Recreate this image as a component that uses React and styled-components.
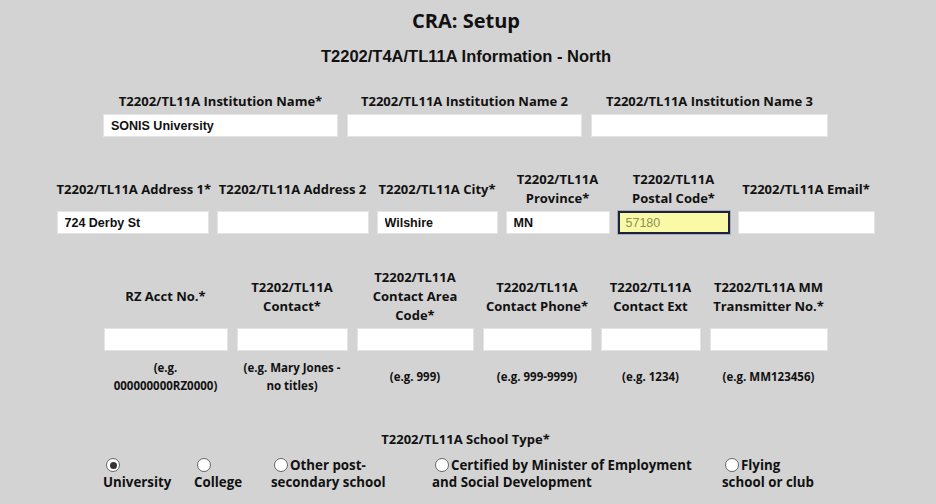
import React from "react";
import styled, { createGlobalStyle } from "styled-components";

const GlobalStyle = createGlobalStyle`
  body {
    margin: 0;
    background: #d3d3d3;
    font-family: "Open Sans", "Lato", sans-serif;
    color: #111;
  }
`;

const institution = [
  { label: "T2202/TL11A Institution Name*", value: "SONIS University" },
  { label: "T2202/TL11A Institution Name 2", value: "" },
  { label: "T2202/TL11A Institution Name 3", value: "" },
];

const address = [
  { label: "T2202/TL11A Address 1*", value: "724 Derby St" },
  { label: "T2202/TL11A Address 2", value: "" },
  { label: "T2202/TL11A City*", value: "Wilshire" },
  { label: ["T2202/TL11A", "Province*"], value: "MN" },
  { label: ["T2202/TL11A", "Postal Code*"], value: "57180", focus: true },
  { label: "T2202/TL11A Email*", value: "" },
];

const contact = [
  { label: ["RZ Acct No.*"], hint: ["(e.g.", "000000000RZ0000)"] },
  { label: ["T2202/TL11A", "Contact*"], hint: ["(e.g. Mary Jones -", "no titles)"] },
  { label: ["T2202/TL11A", "Contact Area", "Code*"], hint: ["(e.g. 999)"] },
  { label: ["T2202/TL11A", "Contact Phone*"], hint: ["(e.g. 999-9999)"] },
  { label: ["T2202/TL11A", "Contact Ext"], hint: ["(e.g. 1234)"] },
  { label: ["T2202/TL11A MM", "Transmitter No.*"], hint: ["(e.g. MM123456)"] },
];

const schoolTypes = [
  { first: "", rest: "University", checked: true },
  { first: "", rest: "College" },
  { first: "Other post-", rest: "secondary school" },
  { first: "Certified by Minister of Employment", rest: "and Social Development" },
  { first: "Flying", rest: "school or club" },
];

function Lines({ value }) {
  const list = Array.isArray(value) ? value : [value];
  return list.map((line, i) => (
    <React.Fragment key={i}>
      {i > 0 && <br />}
      {line}
    </React.Fragment>
  ));
}

export default function App() {
  return (
    <Page>
      <GlobalStyle />
      <Title>CRA: Setup</Title>
      <Subtitle>T2202/T4A/TL11A Information - North</Subtitle>

      <FieldGrid $cols="235px 235px 237px" $gap="9px" $top="26px">
        {institution.map((f) => (
          <Label key={f.label}>{f.label}</Label>
        ))}
        {institution.map((f) => (
          <TextBox key={f.label} defaultValue={f.value} />
        ))}
      </FieldGrid>

      <FieldGrid $cols="152px 152px 121px 104px 112px 137px" $gap="8px" $top="33px">
        {address.map((f, i) => (
          <Label key={i}>
            <Lines value={f.label} />
          </Label>
        ))}
        {address.map((f, i) => (
          <TextBox key={i} defaultValue={f.value} $focus={f.focus} />
        ))}
      </FieldGrid>

      <FieldGrid $cols="124px 111px 117px 109px 100px 118px" $gap="9px" $top="34px">
        {contact.map((f, i) => (
          <Label key={i}>
            <Lines value={f.label} />
          </Label>
        ))}
        {contact.map((f, i) => (
          <TextBox key={i} defaultValue="" />
        ))}
        {contact.map((f, i) => (
          <Hint key={i}>
            <Lines value={f.hint} />
          </Hint>
        ))}
      </FieldGrid>

      <SchoolSection>
        <Label>T2202/TL11A School Type*</Label>
        <RadioRow>
          {schoolTypes.map((t) => (
            <RadioOption key={t.rest}>
              <Radio type="radio" name="schoolType" defaultChecked={t.checked} />
              {t.first}
              <br />
              {t.rest}
            </RadioOption>
          ))}
        </RadioRow>
      </SchoolSection>
    </Page>
  );
}

const Page = styled.div`
  width: 936px;
  height: 504px;
  overflow: hidden;
  padding-top: 9px;
  box-sizing: border-box;
  display: flex;
  flex-direction: column;
  align-items: center;
`;

const Title = styled.h1`
  margin: 0 0 0 -4px;
  font-size: 20px;
  line-height: 24px;
  font-weight: 700;
`;

const Subtitle = styled.h2`
  margin: 13px 0 0 -4px;
  font-family: "Liberation Sans", Arial, sans-serif;
  font-size: 16.5px;
  line-height: 20px;
  font-weight: 700;
`;

const FieldGrid = styled.div`
  margin-top: ${(p) => p.$top};
  margin-left: -5px;
  display: grid;
  grid-template-columns: ${(p) => p.$cols};
  column-gap: ${(p) => p.$gap};
  row-gap: 3px;
  align-items: center;
`;

const Label = styled.div`
  font-size: 13px;
  line-height: 19px;
  font-weight: 700;
  text-align: center;
  white-space: nowrap;
`;

const TextBox = styled.input`
  box-sizing: border-box;
  width: 100%;
  height: 23px;
  margin: 0;
  padding: 0 7px;
  border: 1px solid #e4e4e4;
  background: #fff;
  font-family: "Liberation Sans", Arial, sans-serif;
  font-size: 12.5px;
  font-weight: 700;
  color: #111;
  outline: none;

  ${(p) =>
    p.$focus &&
    `
    background: #fafaa6;
    border: 2px solid #1d2240;
    box-shadow: 0 0 0 1px #a9abb8;
    padding: 0 6px;
    color: #8e8e55;
    font-weight: 400;
  `}
`;

const Hint = styled.div`
  margin-top: 5px;
  font-size: 11.5px;
  line-height: 18px;
  font-weight: 700;
  text-align: center;
  white-space: nowrap;
`;

const SchoolSection = styled.div`
  margin-top: 35px;
  margin-left: -5px;
  display: flex;
  flex-direction: column;
  align-items: center;
  gap: 8px;
`;

const RadioRow = styled.div`
  display: grid;
  grid-template-columns: 91px 77px 161px 290px 106px;
`;

const RadioOption = styled.label`
  font-size: 13.3px;
  line-height: 17px;
  font-weight: 700;
  white-space: nowrap;
`;

const Radio = styled.input`
  appearance: none;
  width: 14px;
  height: 14px;
  margin: 0 2px 0 3px;
  border: 1px solid #666;
  border-radius: 50%;
  background: #fff;
  vertical-align: -2px;
  position: relative;

  &:checked::after {
    content: "";
    position: absolute;
    left: 2.5px;
    top: 2.5px;
    width: 7px;
    height: 7px;
    border-radius: 50%;
    background: #333;
  }
`;
